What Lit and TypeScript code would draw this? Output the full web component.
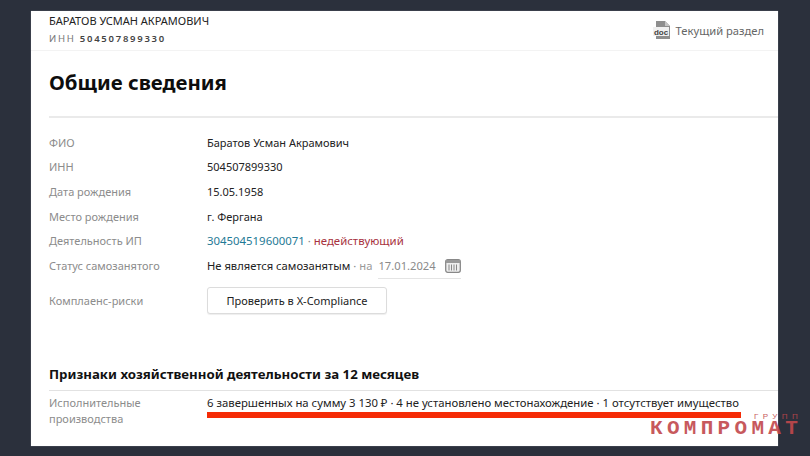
import { LitElement, html, css } from "lit";
import { customElement } from "lit/decorators.js";

@customElement("app-root")
export class AppRoot extends LitElement {
  static styles = css`
    :host { display: block; width: 810px; height: 456px; background: #2b303c; overflow: hidden; position: relative; font-family: "Noto Sans", "Open Sans", sans-serif; color: #1a1a1a; }
    .page { box-sizing: border-box; margin: 11px 32px 0 31px; height: 435px; background: #fff; display: flex; flex-direction: column; box-shadow: 0 0 1px #8a8f99; }
    .top { display: flex; justify-content: space-between; padding: 0 14px 0 18px; height: 39px; border-bottom: 1px solid #f3f3f3; }
    .name { font-size: 11px; line-height: 14px; margin-top: 3px; color: #222; }
    .inn { font-size: 9.5px; line-height: 12px; margin-top: 5px; letter-spacing: 1.75px; color: #777; }
    .inn b { color: #444; font-weight: 600; }
    .section { display: flex; align-items: center; gap: 5px; font-size: 11.2px; color: #666; margin-top: -1px; }
    .main { padding: 0 0 0 18px; }
    h1 { margin: 0; font-size: 20.4px; line-height: 28px; font-weight: 700; color: #0d0d0d; padding: 17px 0 20px; border-bottom: 2px solid #eaeaea; }
    .rows { padding-top: 12.6px; display: flex; flex-direction: column; }
    .row { display: grid; grid-template-columns: 158px 1fr; height: 24.6px; font-size: 11px; line-height: 24px; align-items: center; }
    .label { color: #8c8c8c; }
    .value { color: #222; display: flex; align-items: center; gap: 3px; height: 24px; }
    .ip { font-size: 11.4px; gap: 3px; }
    .status { font-size: 11.2px; }
    .muted { color: #999; }
    .link { color: #1f7a96; }
    .dot { color: #888; }
    .bad { color: #a8323e; }
    .date { display: inline-flex; align-items: center; gap: 9px; color: #8a8a8a; border-bottom: 1px solid #e4e4e4; height: 24px; margin-top: 1px; margin-left: 3px; }
    .row.tall { height: 30px; margin-top: 7.4px; }
    button { font: inherit; font-size: 11px; color: #222; background: #fff; border: 1px solid #dcdcdc; border-radius: 3px; width: 180px; height: 27px; padding: 0; box-shadow: 0 1px 1px #eee; }
    h2 { margin: 49px 0 0; font-size: 13.25px; line-height: 18px; font-weight: 700; color: #111; padding-bottom: 7px; border-bottom: 1px solid #e2e2e2; }
    .exec { display: grid; grid-template-columns: 158px 1fr; font-size: 11px; line-height: 16px; padding-top: 4px; }
    .exec .value { display: block; font-size: 11.34px; height: auto; }
    .bar { height: 6px; width: 534px; background: #f52b06; margin-top: 1px; }
    .mark { position: absolute; left: 650px; top: 412px; width: 155px; height: 28px; font-family: "Liberation Mono", "DejaVu Sans Mono", monospace; color: #c2484c; opacity: .9; }
    .mark .g { position: absolute; left: 104px; top: 1px; font-family: "Liberation Sans", sans-serif; font-size: 8px; line-height: 8px; letter-spacing: 4.4px; white-space: nowrap; }
    .mark .k { position: absolute; left: 0; top: 9px; font-size: 21px; line-height: 16px; letter-spacing: 4.3px; font-weight: 700; white-space: nowrap; }
  `;
  render() {
    return html`<div class="page">
      <div class="top">
        <div>
          <div class="name">БАРАТОВ УСМАН АКРАМОВИЧ</div>
          <div class="inn">ИНН <b>504507899330</b></div>
        </div>
        <div class="section">
          <svg width="18" height="18" viewBox="0 0 18 18"><path d="M3 0h9l5 5v13H3z" fill="#8e8e8e"/><path d="M12 0l5 5h-5z" fill="#c4c4c4"/><rect x="0" y="6" width="16" height="9" fill="#f0f0f0"/><text x="8" y="13.500" font-size="8" font-family="Liberation Sans" font-weight="700" text-anchor="middle" fill="#444">doc</text></svg>
          <span>Текущий раздел</span>
        </div>
      </div>
      <div class="main">
        <h1>Общие сведения</h1>
        <div class="rows">
          <div class="row"><span class="label">ФИО</span><span class="value">Баратов Усман Акрамович</span></div>
          <div class="row"><span class="label">ИНН</span><span class="value">504507899330</span></div>
          <div class="row"><span class="label">Дата рождения</span><span class="value">15.05.1958</span></div>
          <div class="row"><span class="label">Место рождения</span><span class="value">г. Фергана</span></div>
          <div class="row"><span class="label">Деятельность ИП</span><span class="value ip"><span class="link">304504519600071</span><span class="dot">·</span><span class="bad">недействующий</span></span></div>
          <div class="row"><span class="label">Статус самозанятого</span><span class="value status">Не является самозанятым<span class="dot">·</span><span class="muted">на</span>
            <span class="date">17.01.2024
              <svg width="16" height="14" viewBox="0 0 16 14"><rect x=".7" y=".7" width="14.6" height="12.6" rx="2" fill="#eee" stroke="#888" stroke-width="1.3"/><rect x="1" y="1" width="14" height="3" fill="#999"/><path d="M4 5.500v6M6.500 5.500v6M9 5.500v6M11.500 5.500v6" stroke="#888" stroke-width="1"/></svg>
            </span></span></div>
          <div class="row tall"><span class="label">Комплаенс-риски</span><span class="value"><button>Проверить в X-Compliance</button></span></div>
        </div>
        <h2>Признаки хозяйственной деятельности за 12 месяцев</h2>
        <div class="exec">
          <span class="label">Исполнительные<br />производства</span>
          <div class="value">6 завершенных на сумму 3 130 ₽ · 4 не установлено местонахождение · 1 отсутствует имущество<div class="bar"></div></div>
        </div>
      </div>
    </div>
    <div class="mark"><span class="g">ГРУПП</span><span class="k">КОМПРОМАТ</span></div>`;
  }
}
